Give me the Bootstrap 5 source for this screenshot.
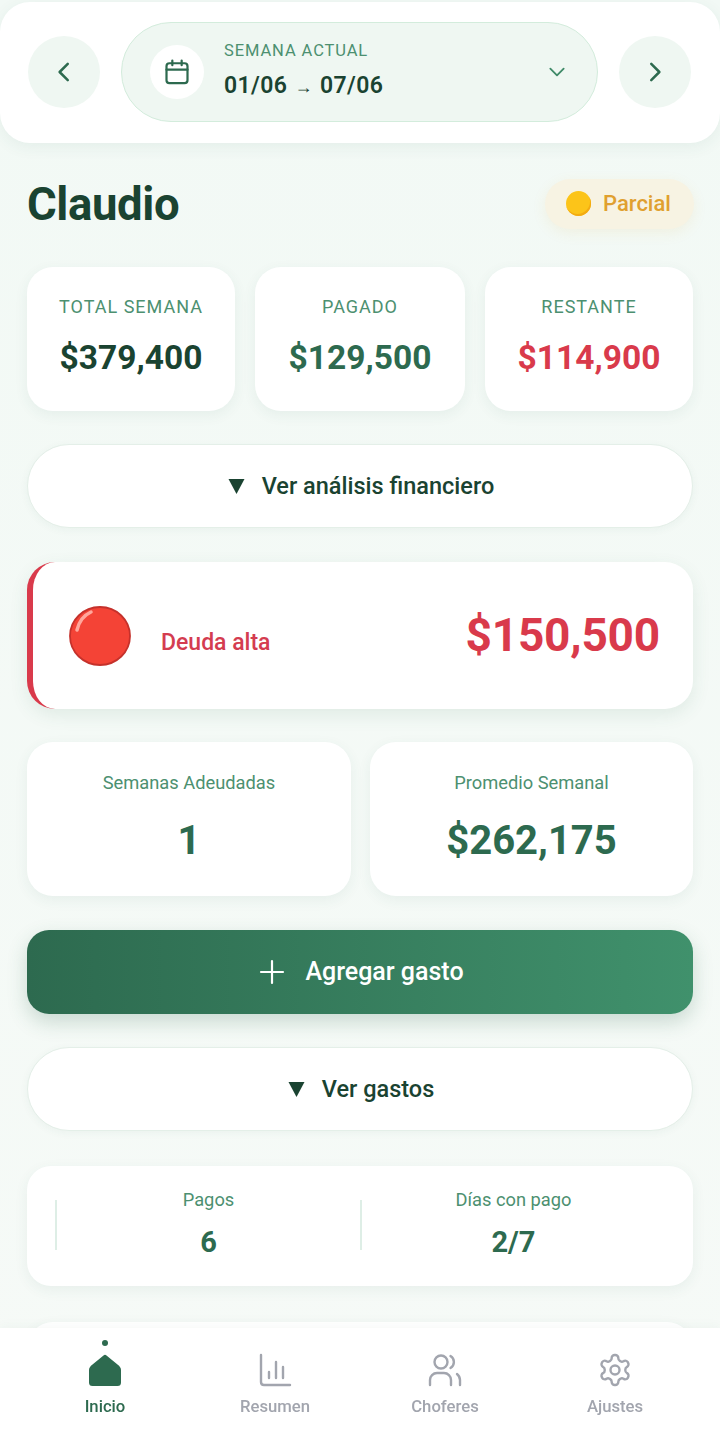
<!DOCTYPE html>
<html lang="es">
<head>
  <meta charset="UTF-8">
  <title>Claudio</title>
  <meta name="viewport" content="width=device-width, initial-scale=1">
  <link href="https://cdn.jsdelivr.net/npm/bootstrap@5.3.0/dist/css/bootstrap.min.css" rel="stylesheet">
  <style>
    html, body { height: 1439px; overflow: hidden; }
    body { font-family: Roboto, "Liberation Sans", sans-serif; background: linear-gradient(180deg, #f2f9f5, #f6faf7); color: #1a4331; }
    .top-bar { height: 141px; margin-top: 2px; padding: 0 28px 2px; background: #fff; border-radius: 30px; box-shadow: 0 4px 16px rgba(45,106,79,.07); }
    .round-btn { width: 72px; height: 72px; border: 0; border-radius: 50%; background: #eff7f2; color: #2d6a4f; flex: none; }
    .week-pill { width: 477px; height: 100px; margin: 0 21px; padding: 0 30px 0 28px; background: #eff7f2; border: 1.5px solid #d3ecdc; border-radius: 50px; flex: none; }
    .cal-circle { width: 54px; height: 54px; border-radius: 50%; background: #fff; flex: none; }
    .week-label { font-size: 16.500px; font-weight: 400; letter-spacing: .9px; color: #4c9070; line-height: 20px; }
    .week-dates { font-size: 23px; font-weight: 600; letter-spacing: .4px; color: #1a4331; line-height: 30px; margin-top: 10px; }
    .week-dates small { font-size: 18px; font-weight: 500; margin: 0 1px; }
    .page-body { padding: 0 27px; }
    .title-row { height: 124px; }
    .title-row h1 { font-size: 45.500px; font-weight: 700; letter-spacing: -.4px; color: #1a4331; margin: 0; }
    .state-chip { width: 149px; height: 50px; margin-top: -3px; margin-right: -1px; padding-right: 2px; background: #f7f3e3; border-radius: 25px; box-shadow: 0 4px 14px rgba(230,170,50,.1); color: #e0a030; font-size: 22px; font-weight: 500; gap: 12px; }
    .coin { width: 25px; height: 25px; border-radius: 50%; background: #fcc419; box-shadow: inset -1px -2px 0 #f3ab12; }
    .white-card { background: #fff; border-radius: 26px; box-shadow: 0 4px 14px rgba(45,106,79,.07); }
    .stat-grid { display: grid; grid-template-columns: 208px 210px 208px; gap: 20px; }
    .stat-box { height: 144px; padding-top: 29px; text-align: center; }
    .stat-label { font-size: 18px; letter-spacing: 1px; color: #4c9070; line-height: 22px; }
    .stat-value { font-size: 33.500px; font-weight: 700; line-height: 40px; margin-top: 20px; color: #1a4331; }
    .val-green { color: #2d6a4f; }
    .val-red { color: #d93a4b; }
    .toggle-pill { height: 84px; width: 100%; padding: 1px 0 0 2px; background: #fff; border: 1.5px solid #e4efe8; border-radius: 42px; box-shadow: 0 2px 8px rgba(45,106,79,.05); color: #1a4331; font-size: 23.500px; font-weight: 500; gap: 17px; }
    .toggle-pill svg { flex: none; }
    .toggle-a { margin-top: 33px; }
    .toggle-b { margin-top: 33px; }
    .debt-card { height: 147px; margin-top: 34px; padding: 0 33px 0 36px; border-left: 6px solid #d93a4b; box-shadow: 0 6px 18px rgba(45,106,79,.1); border-radius: 28px; }
    .red-ball { flex: none; display: block; }
    .debt-label { font-size: 23px; font-weight: 500; color: #d43c50; margin: 15px 0 0 30px; }
    .debt-value { font-size: 46px; font-weight: 700; color: #d93a4b; letter-spacing: -.2px; }
    .two-grid { display: grid; grid-template-columns: 324px 323px; gap: 19px; margin-top: 33px; }
    .mini-box { height: 154px; padding-top: 30px; text-align: center; }
    .mini-label { font-size: 18.300px; color: #4c9070; line-height: 22px; }
    .mini-value { font-size: 40px; font-weight: 700; color: #2d6a4f; line-height: 48px; margin-top: 23px; }
    .add-btn { height: 84px; width: 100%; margin-top: 34px; padding-left: 9px; border: 0; border-radius: 22px; background: linear-gradient(90deg, #2d6a4f, #40916c); box-shadow: 0 8px 20px rgba(45,106,79,.22); color: #fff; font-size: 25px; font-weight: 500; gap: 20px; }
    .count-card { height: 120px; margin-top: 35px; border-radius: 24px; padding-top: 23px; }
    .count-cell { width: 305px; height: 50px; border-left: 2px solid #deeee6; text-align: center; margin-top: 11px; }
    .count-grid { padding-left: 28px; }
    .count-text { margin-top: -11px; }
    .count-label { font-size: 18.300px; color: #4c9070; line-height: 22px; }
    .count-value { font-size: 29px; font-weight: 700; color: #2d6a4f; line-height: 36px; margin-top: 13px; }
    .peek-card { height: 60px; margin-top: 36px; }
    .tab-bar { height: 111px; background: #fff; box-shadow: 0 -2px 10px rgba(45,106,79,.04); }
    .tab-item { width: 170px; padding-top: 25px; color: #a2a5ae; font-size: 16.700px; font-weight: 500; text-align: center; position: relative; }
    .tab-item svg { display: block; margin: 0 auto 7px; }
    .tab-item .gear-icon { margin: -1px auto 6px; }
    .tab-on { color: #2d6a4f; }
    .tab-dot { position: absolute; top: 12px; left: 82px; width: 6px; height: 6px; border-radius: 50%; background: #2d6a4f; }
  </style>
</head>
<body>
  <div class="top-bar d-flex align-items-center">
    <button class="round-btn d-flex align-items-center justify-content-center" aria-label="Anterior">
      <svg width="30" height="30" viewBox="0 0 24 24" fill="none" stroke="currentColor" stroke-width="2" stroke-linecap="round" stroke-linejoin="round"><path d="M15 5.500 8.500 12l6.500 6.500"/></svg>
    </button>
    <div class="week-pill d-flex align-items-center">
      <div class="cal-circle d-flex align-items-center justify-content-center">
        <svg width="28" height="28" viewBox="0 0 24 24" fill="none" stroke="#2d6a4f" stroke-width="1.900" stroke-linecap="round" stroke-linejoin="round"><rect x="3" y="4.500" width="18" height="17" rx="2.500"/><path d="M8 2.200v4M16 2.200v4M3 10h18"/></svg>
      </div>
      <div class="ms-3 ps-1 flex-grow-1">
        <div class="week-label">SEMANA ACTUAL</div>
        <div class="week-dates">01/06 <small>→</small> 07/06</div>
      </div>
      <svg width="20" height="20" viewBox="0 0 24 24" fill="none" stroke="#3f8a68" stroke-width="2.200" stroke-linecap="round" stroke-linejoin="round"><path d="m4 8 8 8 8-8"/></svg>
    </div>
    <button class="round-btn d-flex align-items-center justify-content-center" aria-label="Siguiente">
      <svg width="30" height="30" viewBox="0 0 24 24" fill="none" stroke="currentColor" stroke-width="2" stroke-linecap="round" stroke-linejoin="round"><path d="m9 5.500 6.500 6.500L9 18.500"/></svg>
    </button>
  </div>

  <div class="page-body">
    <div class="title-row d-flex align-items-center justify-content-between">
      <h1>Claudio</h1>
      <div class="state-chip d-flex align-items-center justify-content-center"><span class="coin"></span>Parcial</div>
    </div>

    <div class="stat-grid">
      <div class="white-card stat-box"><div class="stat-label">TOTAL SEMANA</div><div class="stat-value">$379,400</div></div>
      <div class="white-card stat-box"><div class="stat-label">PAGADO</div><div class="stat-value val-green">$129,500</div></div>
      <div class="white-card stat-box"><div class="stat-label">RESTANTE</div><div class="stat-value val-red">$114,900</div></div>
    </div>

    <div class="toggle-pill toggle-a d-flex align-items-center justify-content-center"><svg width="17" height="15" viewBox="0 0 17 15"><path d="M.5 0h16L8.500 15z" fill="#1a4331"/></svg>Ver análisis financiero</div>

    <div class="white-card debt-card d-flex align-items-center">
      <svg class="red-ball" width="62" height="60" viewBox="0 0 62 60"><ellipse cx="31" cy="30" rx="30" ry="29" fill="#f44336" stroke="#c5312b" stroke-width="1.800"/><path d="M8 24Q11 11 22 6" fill="none" stroke="#ffa79c" stroke-width="3.500" stroke-linecap="round"/></svg>
      <span class="debt-label flex-grow-1">Deuda alta</span>
      <span class="debt-value">$150,500</span>
    </div>

    <div class="two-grid">
      <div class="white-card mini-box"><div class="mini-label">Semanas Adeudadas</div><div class="mini-value">1</div></div>
      <div class="white-card mini-box"><div class="mini-label">Promedio Semanal</div><div class="mini-value">$262,175</div></div>
    </div>

    <button class="add-btn d-flex align-items-center justify-content-center">
      <svg width="26" height="26" viewBox="0 0 26 26" fill="none" stroke="#fff" stroke-width="2.200" stroke-linecap="round"><path d="M13 2v22M2 13h22"/></svg>
      Agregar gasto
    </button>

    <div class="toggle-pill toggle-b d-flex align-items-center justify-content-center"><svg width="17" height="15" viewBox="0 0 17 15"><path d="M.5 0h16L8.500 15z" fill="#1a4331"/></svg>Ver gastos</div>

    <div class="white-card count-card d-flex count-grid">
      <div class="count-cell"><div class="count-text"><div class="count-label">Pagos</div><div class="count-value">6</div></div></div>
      <div class="count-cell"><div class="count-text"><div class="count-label">Días con pago</div><div class="count-value">2/7</div></div></div>
    </div>

    <div class="white-card peek-card"></div>
  </div>

  <nav class="tab-bar fixed-bottom d-flex justify-content-center">
    <div class="tab-item tab-on">
      <span class="tab-dot"></span>
      <svg width="34" height="34" viewBox="0 0 34 34"><path d="M15.500 2.500Q17 1 18.500 2.500L29.500 11.500Q33 14 33 17V29.500Q33 33 29.500 33H4.500Q1 33 1 29.500V17Q1 14 4.500 11.500Z" fill="#2d6a4f"/></svg>
      Inicio
    </div>
    <div class="tab-item">
      <svg width="34" height="34" viewBox="0 0 34 34" fill="none" stroke="#a2a5ae" stroke-width="2.400" stroke-linecap="round" stroke-linejoin="round"><path d="M3 2v27q0 3 3 3h26"/><path d="M11 25v-6M18 25V9M25 25V14"/></svg>
      Resumen
    </div>
    <div class="tab-item">
      <svg width="34" height="34" viewBox="0 0 34 34" fill="none" stroke="#a2a5ae" stroke-width="2.400" stroke-linecap="round" stroke-linejoin="round"><circle cx="13" cy="9" r="6.500"/><path d="M2 32v-5a7 7 0 0 1 7-7h7a7 7 0 0 1 7 7v5"/><path d="M22.500 3a7 7 0 0 1 0 12M29 21a8 8 0 0 1 3 6v5"/></svg>
      Choferes
    </div>
    <div class="tab-item">
      <svg class="gear-icon" width="36" height="36" viewBox="0 0 24 24" fill="none" stroke="#a2a5ae" stroke-width="1.600" stroke-linecap="round" stroke-linejoin="round"><path d="M12.220 2h-.44a2 2 0 0 0-2 2v.18a2 2 0 0 1-1 1.730l-.43.250a2 2 0 0 1-2 0l-.15-.08a2 2 0 0 0-2.730.730l-.22.380a2 2 0 0 0 .730 2.730l.15.100a2 2 0 0 1 1 1.720v.510a2 2 0 0 1-1 1.740l-.15.090a2 2 0 0 0-.730 2.730l.22.380a2 2 0 0 0 2.730.730l.15-.08a2 2 0 0 1 2 0l.43.250a2 2 0 0 1 1 1.730V20a2 2 0 0 0 2 2h.44a2 2 0 0 0 2-2v-.18a2 2 0 0 1 1-1.730l.43-.25a2 2 0 0 1 2 0l.15.080a2 2 0 0 0 2.730-.730l.22-.39a2 2 0 0 0-.730-2.730l-.15-.08a2 2 0 0 1-1-1.740v-.5a2 2 0 0 1 1-1.740l.15-.09a2 2 0 0 0 .730-2.730l-.22-.38a2 2 0 0 0-2.730-.730l-.15.080a2 2 0 0 1-2 0l-.43-.25a2 2 0 0 1-1-1.730V4a2 2 0 0 0-2-2z"/><circle cx="12" cy="12" r="3"/></svg>
      Ajustes
    </div>
  </nav>
  <script src="https://cdn.jsdelivr.net/npm/bootstrap@5.3.0/dist/js/bootstrap.bundle.min.js"></script>
</body>
</html>
